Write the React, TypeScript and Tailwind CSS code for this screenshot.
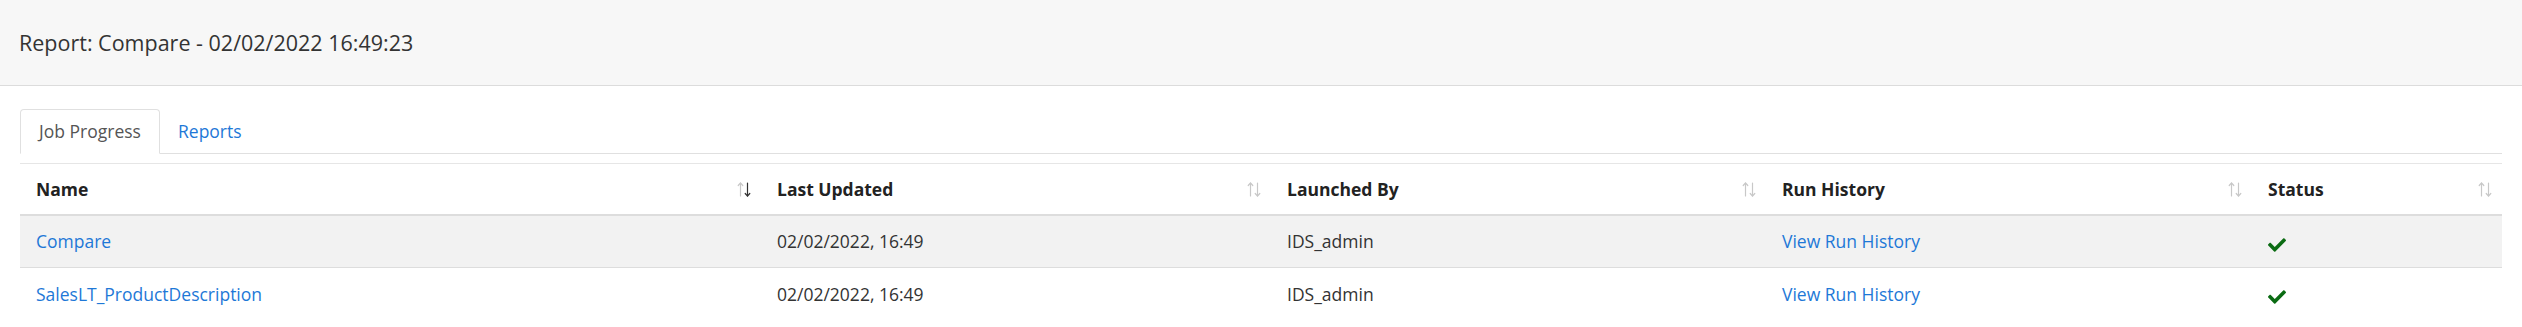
import React from 'react';

interface JobRow {
  name: string;
  lastUpdated: string;
  launchedBy: string;
}

const rows: JobRow[] = [
  { name: 'Compare', lastUpdated: '02/02/2022, 16:49', launchedBy: 'IDS_admin' },
  { name: 'SalesLT_ProductDescription', lastUpdated: '02/02/2022, 16:49', launchedBy: 'IDS_admin' },
];

const columns = [
  { label: 'Name', width: 'w-[741px]', active: true },
  { label: 'Last Updated', width: 'w-[510px]', active: false },
  { label: 'Launched By', width: 'w-[495px]', active: false },
  { label: 'Run History', width: 'w-[486px]', active: false },
  { label: 'Status', width: 'w-[250px]', active: false },
];

const SortIcon: React.FC<{ active: boolean }> = ({ active }) => (
  <svg width="14" height="17" viewBox="0 0 14 17" fill="none" strokeWidth="1.2" strokeLinecap="round" strokeLinejoin="round">
    {/* up arrow */}
    <g stroke="#c8c8c8">
      <path d="M3.5 15V2" />
      <path d="M1.2 4.5L3.5 2l2.3 2.5" />
    </g>
    {/* down arrow */}
    <g stroke={active ? '#333333' : '#c8c8c8'}>
      <path d="M10.5 2v13" />
      <path d="M8.2 12.5l2.3 2.5 2.3-2.5" />
    </g>
  </svg>
);

const CheckIcon: React.FC = () => (
  <svg width="18" height="14" viewBox="0 72 512 372" fill="#0b6b13">
    <path d="M173.898 439.404l-166.4-166.4c-9.997-9.997-9.997-26.206 0-36.204l36.203-36.204c9.997-9.998 26.207-9.998 36.204 0L192 312.69 432.095 72.596c9.997-9.997 26.207-9.997 36.204 0l36.203 36.204c9.997 9.997 9.997 26.206 0 36.204l-294.4 294.401c-9.998 9.997-26.207 9.997-36.204-.001z" />
  </svg>
);

const App: React.FC = () => {
  return (
    <div className="min-h-[327px] bg-white text-[#333] font-['Open_Sans',sans-serif]">
      {/* Page header */}
      <div className="h-[86px] bg-[#f7f7f7] border-b border-[#dcdcdc] flex items-center px-[19px]">
        <h1 className="text-[21.5px] text-[#333] leading-none">Report: Compare - 02/02/2022 16:49:23</h1>
      </div>

      <div className="px-[20px] pt-[23px]">
        {/* Tabs */}
        <div className="flex border-b border-[#e0e0e0] h-[45px] text-[17.5px]">
          <div className="w-[140px] h-[45px] -mb-px bg-white border border-[#e0e0e0] border-b-white rounded-t-[4px] flex items-center justify-center text-[#555]">
            Job Progress
          </div>
          <div className="px-[18px] flex items-center text-[#1e78d7]">Reports</div>
        </div>

        {/* Table */}
        <div className="mt-[9px] border-t border-[#e6e6e6] text-[17.5px]">
          <div className="flex h-[52px] border-b-2 border-[#dddddd]">
            {columns.map(col => (
              <div key={col.label} className={`${col.width} flex items-center justify-between pl-[16px] pr-[10px]`}>
                <span className="font-bold text-[#222]">{col.label}</span>
                <SortIcon active={col.active} />
              </div>
            ))}
          </div>
          {rows.map((row, i) => (
            <div
              key={row.name}
              className={`flex h-[52px] items-center ${i === 0 ? 'bg-[#f2f2f2] border-b border-[#dddddd]' : 'bg-white'}`}
            >
              <div className="w-[741px] pl-[16px] text-[#1e78d7]">{row.name}</div>
              <div className="w-[510px] pl-[16px]">{row.lastUpdated}</div>
              <div className="w-[495px] pl-[16px]">{row.launchedBy}</div>
              <div className="w-[486px] pl-[16px] text-[#1e78d7]">View Run History</div>
              <div className="w-[250px] pl-[16px] pt-[6px] flex items-center">
                <CheckIcon />
              </div>
            </div>
          ))}
        </div>
      </div>
    </div>
  );
};

export default App;
